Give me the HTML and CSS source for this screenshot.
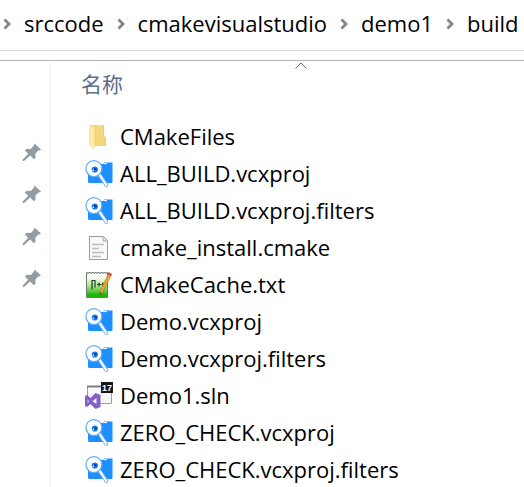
FILE: index.html
```html
<!DOCTYPE html>
<html lang="zh-CN">
<head>
<meta charset="utf-8">
<meta name="viewport" content="width=device-width, initial-scale=1">
<title>build</title>
<link rel="stylesheet" href="styles.css">
</head>
<body>
<svg class="sprite" aria-hidden="true">
  <symbol id="chevron" viewBox="0 0 8 12"><path d="M1.500 1.500 6 6l-4.500 4.500" fill="none" stroke="#858585" stroke-width="2.800"/></symbol>
  <symbol id="pin" viewBox="0 0 20 20"><path d="M12.500 1.500 19 7.500l-1.500 1-1-.2-3.200 3.400.3 3.800-1.800 1.700-3.600-3.600L2 19H.7v-1.600l5.500-5.600-3.400-3.400 2-1.700 4 .2 3-3.200z" fill="#919ca3"/></symbol>
  <symbol id="folder" viewBox="0 0 28 28">
    <path d="M5 2h14v11l2 2v8H5z" fill="#f7d77c"/>
    <path d="M18.500 2v11l2 2v8" fill="none" stroke="#efca6c"/>
    <path d="M4 2l6 3v21l-6-3z" fill="#ffe9a6"/>
    <path d="M10 5v18" stroke="#edcb70" stroke-width=".8"/>
  </symbol>
  <symbol id="project" viewBox="0 0 28 28">
    <path d="M3 11h9V4h6l1-1.500h8.500V22q0 1-1 1h-22Q3 23 3 21.500z" fill="#1e8fff"/>
    <path d="M18.500 3.600H22" stroke="#fff"/>
    <path d="m14 14 7.300 11" stroke="#6bb0f8" stroke-width="4" stroke-linecap="round"/>
    <path d="m14 14 7.300 11" stroke="#fff" stroke-width="2.200" stroke-linecap="round"/>
    <circle cx="8.900" cy="8.600" r="8" fill="#fff" stroke="#5baafa" stroke-width="1.200"/>
    <circle cx="9.800" cy="9.500" r="3.100" fill="#167de8"/>
    <circle cx="10.500" cy="9.200" r="1.300" fill="#073f91"/>
    <circle cx="8.300" cy="10.300" r=".8" fill="#fff"/>
  </symbol>
  <symbol id="document" viewBox="0 0 28 28">
    <path d="M4.500 2.500h14l4 4v19h-18z" fill="#f8f8f8" stroke="#9d9d9d"/>
    <path d="M18 2.500V7h4.500" fill="#e1e1e1" stroke="#aaa"/>
    <path d="M7 10.500h12M7 14.500h7M7 18.500h12M7 22.500h9" stroke="#bcbcbc" stroke-width="1.500"/>
  </symbol>
  <symbol id="notepad" viewBox="0 0 28 28">
    <defs><linearGradient id="green" x2="0" y2="1"><stop offset=".15" stop-color="#fff"/><stop offset=".5" stop-color="#b5e99a"/><stop offset=".9" stop-color="#1fb40a"/></linearGradient></defs>
    <path d="M1.500 1.500h21v25h-21z" fill="url(#green)" stroke="#6e7b6c"/>
    <path d="M2 2h20" stroke="#aaa" stroke-width="2" stroke-dasharray="2 1"/>
    <path d="M7 18.500V9.500h3v7M12 13.500h4M14 11.500v4M16.500 13.500h3M18 11.500v4" fill="none" stroke="#233b23" stroke-width="1.200"/>
    <path d="m24 2 2.500 1.500-8.500 17-3 3 .5-4.500z" fill="#f2a62d" stroke="#b26922" stroke-width=".6"/>
    <path d="m23.500 1 3.500 2-1.200 2.500-3.500-2z" fill="#cc5d43"/>
    <path d="m15.300 21.500 1.300 1-1.800 1.500z" fill="#4a3a27"/>
  </symbol>
  <symbol id="solution" viewBox="0 0 28 28">
    <path d="M2.500 4.500h24v17h-24z" fill="#f7f7f7" stroke="#a0a0a0"/>
    <path d="M2 4.500h14" stroke="#808080" stroke-width="2"/>
    <path d="m0 14 2-1 3.500 3L10.500 11l5 2v12l-5 2L5.500 22 2 25l-2-1zM2 17v4.500l2-2.300zM11.500 16l-4 3.200 4 3.200z" fill="#855fc5" fill-rule="evenodd"/>
    <path d="M16 0h12v11H16z" fill="#171717"/>
    <text x="22" y="9" class="badge" text-anchor="middle">17</text>
  </symbol>
</svg>

<nav class="path" aria-label="路径">
  <svg class="chevron"><use href="#chevron"/></svg><a href="#">srccode</a>
  <svg class="chevron"><use href="#chevron"/></svg><a href="#">cmakevisualstudio</a>
  <svg class="chevron"><use href="#chevron"/></svg><a href="#">demo1</a>
  <svg class="chevron"><use href="#chevron"/></svg><a href="#">build</a>
</nav>

<div class="explorer">
  <aside class="sidebar">
    <svg class="pin"><use href="#pin"/></svg>
    <svg class="pin"><use href="#pin"/></svg>
    <svg class="pin"><use href="#pin"/></svg>
    <svg class="pin"><use href="#pin"/></svg>
  </aside>
  <main class="files">
    <button class="heading" type="button">名称<svg class="sort" viewBox="0 0 12 7"><path d="M.5 6.500 6 1l5.500 5.500" fill="none" stroke="#666"/></svg></button>
    <ul class="list">
      <li><a href="#"><svg class="icon"><use href="#folder"/></svg>CMakeFiles</a></li>
      <li><a href="#"><svg class="icon"><use href="#project"/></svg>ALL_BUILD.vcxproj</a></li>
      <li><a href="#"><svg class="icon"><use href="#project"/></svg>ALL_BUILD.vcxproj.filters</a></li>
      <li><a href="#"><svg class="icon"><use href="#document"/></svg>cmake_install.cmake</a></li>
      <li><a href="#"><svg class="icon"><use href="#notepad"/></svg>CMakeCache.txt</a></li>
      <li><a href="#"><svg class="icon"><use href="#project"/></svg>Demo.vcxproj</a></li>
      <li><a href="#"><svg class="icon"><use href="#project"/></svg>Demo.vcxproj.filters</a></li>
      <li><a href="#"><svg class="icon"><use href="#solution"/></svg>Demo1.sln</a></li>
      <li><a href="#"><svg class="icon"><use href="#project"/></svg>ZERO_CHECK.vcxproj</a></li>
      <li><a href="#"><svg class="icon"><use href="#project"/></svg>ZERO_CHECK.vcxproj.filters</a></li>
    </ul>
  </main>
</div>
</body>
</html>
```
FILE: styles.css
```css
* { box-sizing: border-box; }

body {
  margin: 0;
  background: #fff;
  color: #000;
  font-family: "Open Sans", "Noto Sans CJK SC", sans-serif;
  font-size: 22px;
  line-height: 37px;
}

a { color: inherit; text-decoration: none; }

.sprite { position: absolute; width: 0; height: 0; }

.badge { fill: #fff; font: bold 9px "Liberation Sans", sans-serif; }

.path {
  display: flex;
  align-items: center;
  gap: 13px;
  height: 51px;
  padding: 0 3px 3px;
  border-bottom: 1px solid #d9d9d9;
  white-space: nowrap;
}

.chevron { flex: none; width: 8px; height: 12px; }

.explorer {
  display: flex;
  margin-top: 9px;
  border-top: 1px solid #b4b4b4;
}

.sidebar {
  display: flex;
  flex: none;
  flex-direction: column;
  align-items: flex-end;
  gap: 22px;
  width: 51px;
  padding: 81px 7px 0 0;
  border-right: 2px solid #f5f5f5;
}

.pin { width: 20px; height: 20px; }

.files { flex: 1; min-width: 0; }

.heading {
  position: relative;
  display: block;
  width: 100%;
  height: 44px;
  padding: 0 30px;
  border: 0;
  background: none;
  color: #5c6f88;
  font: 21px/44px "Noto Sans CJK SC", sans-serif;
  text-align: left;
}

.sort { position: absolute; top: 1px; left: calc(50% + 7px); width: 12px; height: 7px; }

.list { margin: 0; padding: 13px 0 0 34px; list-style: none; white-space: nowrap; }

.list a { display: flex; align-items: center; gap: 7px; height: 37px; }

.icon { flex: none; width: 28px; height: 28px; }
```
